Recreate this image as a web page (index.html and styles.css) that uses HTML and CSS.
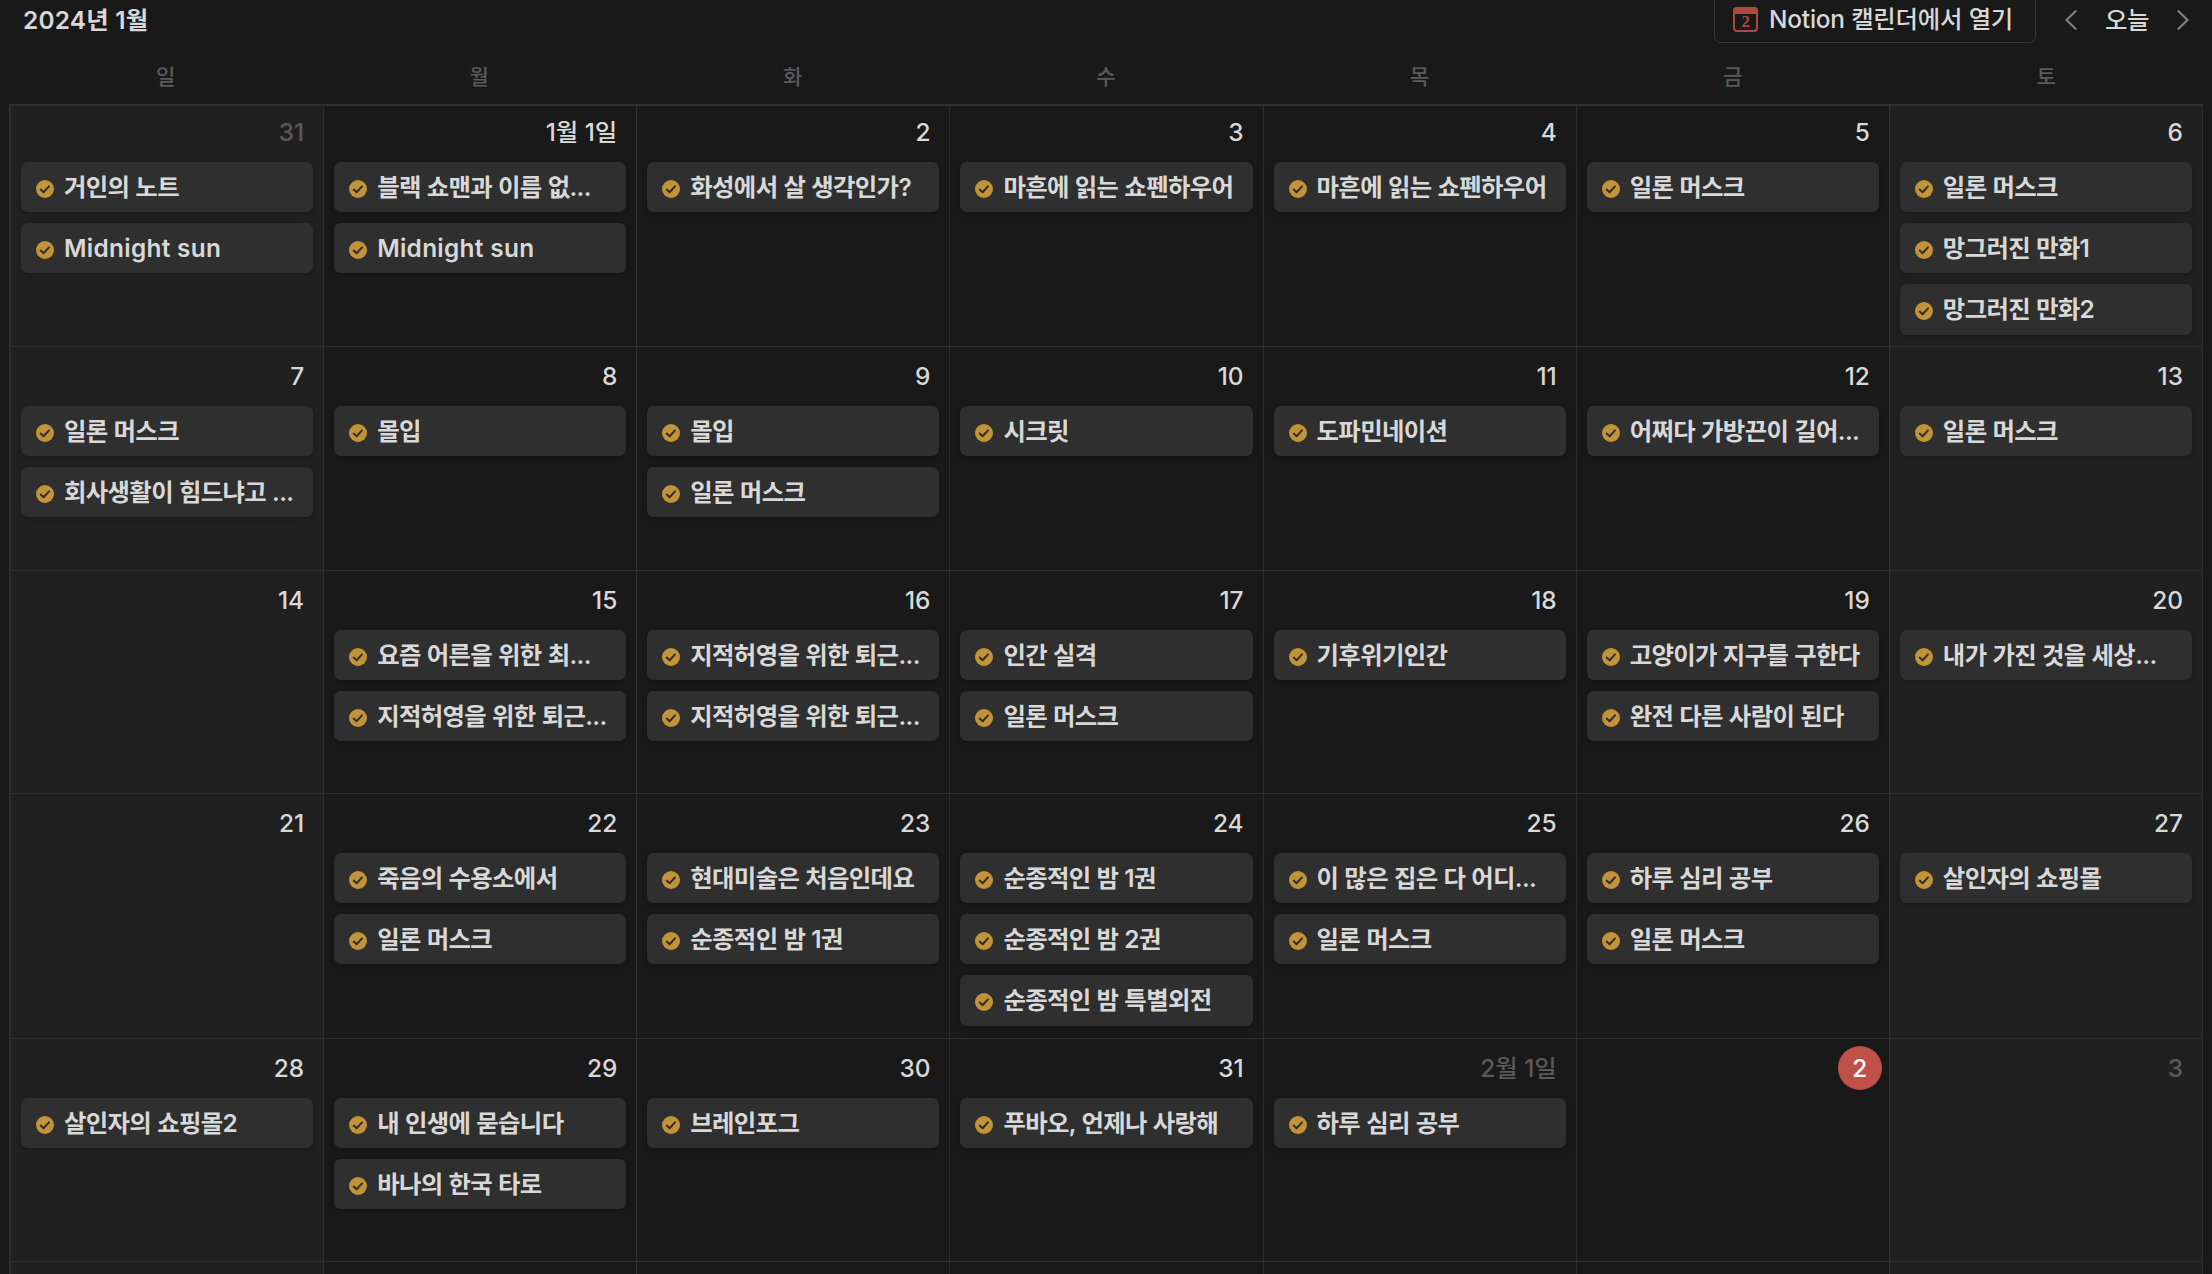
FILE: index.html
```
<!DOCTYPE html>
<html lang="ko">
<head>
  <meta charset="UTF-8">
  <title>2024년 1월</title>
  <link rel="stylesheet" href="styles.css">
</head>
<body>
  <!-- Shared icon -->
  <svg class="sprite" width="0" height="0">
    <symbol id="check" viewBox="0 0 18 18">
      <circle cx="9" cy="9" r="9" fill="#c29338"/>
      <path d="M4.7 9.6 L7.6 12.3 L13 6.4" fill="none" stroke="#2f2f2f" stroke-width="2" stroke-linecap="round" stroke-linejoin="round"/>
    </symbol>
  </svg>

  <div class="calendar">
    <!-- Toolbar -->
    <div class="toolbar">
      <div class="month-title">2024년 1월</div>
      <div class="open-button">
        <svg class="calendar-icon" viewBox="0 0 25 25">
          <rect x="1" y="1" width="23" height="23" rx="3" fill="none" stroke="#ac4a42" stroke-width="2"/>
          <path d="M0 7V4a4 4 0 0 1 4-4h17a4 4 0 0 1 4 4v3z" fill="#ac4a42"/>
          <text x="12.7" y="20" text-anchor="middle" class="icon-day">2</text>
        </svg>
        <span>Notion 캘린더에서 열기</span>
      </div>
      <svg class="arrow" viewBox="0 0 12 20"><path d="M10.5 1.2 1.5 10l9 8.800"/></svg>
      <div class="today-button">오늘</div>
      <svg class="arrow" viewBox="0 0 12 20"><path d="M1.500 1.200l9 8.800-9 8.800"/></svg>
    </div>

    <!-- Weekday names -->
    <div class="weekdays">
      <div>일</div><div>월</div><div>화</div><div>수</div><div>목</div><div>금</div><div>토</div>
    </div>

    <!-- Month grid -->
    <div class="month">
      <div class="week tall first">
        <div class="day weekend other"><div class="date">31</div>
          <div class="card"><svg><use href="#check"/></svg><span>거인의 노트</span></div>
          <div class="card latin"><svg><use href="#check"/></svg><span>Midnight sun</span></div>
        </div>
        <div class="day"><div class="date">1월 1일</div>
          <div class="card"><svg><use href="#check"/></svg><span>블랙 쇼맨과 이름 없...</span></div>
          <div class="card latin"><svg><use href="#check"/></svg><span>Midnight sun</span></div>
        </div>
        <div class="day"><div class="date">2</div>
          <div class="card"><svg><use href="#check"/></svg><span>화성에서 살 생각인가?</span></div>
        </div>
        <div class="day"><div class="date">3</div>
          <div class="card"><svg><use href="#check"/></svg><span>마흔에 읽는 쇼펜하우어</span></div>
        </div>
        <div class="day"><div class="date">4</div>
          <div class="card"><svg><use href="#check"/></svg><span>마흔에 읽는 쇼펜하우어</span></div>
        </div>
        <div class="day"><div class="date">5</div>
          <div class="card"><svg><use href="#check"/></svg><span>일론 머스크</span></div>
        </div>
        <div class="day weekend"><div class="date">6</div>
          <div class="card"><svg><use href="#check"/></svg><span>일론 머스크</span></div>
          <div class="card"><svg><use href="#check"/></svg><span>망그러진 만화1</span></div>
          <div class="card"><svg><use href="#check"/></svg><span>망그러진 만화2</span></div>
        </div>
      </div>

      <div class="week second">
        <div class="day weekend"><div class="date">7</div>
          <div class="card"><svg><use href="#check"/></svg><span>일론 머스크</span></div>
          <div class="card"><svg><use href="#check"/></svg><span>회사생활이 힘드냐고 ...</span></div>
        </div>
        <div class="day"><div class="date">8</div>
          <div class="card"><svg><use href="#check"/></svg><span>몰입</span></div>
        </div>
        <div class="day"><div class="date">9</div>
          <div class="card"><svg><use href="#check"/></svg><span>몰입</span></div>
          <div class="card"><svg><use href="#check"/></svg><span>일론 머스크</span></div>
        </div>
        <div class="day"><div class="date">10</div>
          <div class="card"><svg><use href="#check"/></svg><span>시크릿</span></div>
        </div>
        <div class="day"><div class="date">11</div>
          <div class="card"><svg><use href="#check"/></svg><span>도파민네이션</span></div>
        </div>
        <div class="day"><div class="date">12</div>
          <div class="card"><svg><use href="#check"/></svg><span>어쩌다 가방끈이 길어...</span></div>
        </div>
        <div class="day weekend"><div class="date">13</div>
          <div class="card"><svg><use href="#check"/></svg><span>일론 머스크</span></div>
        </div>
      </div>

      <div class="week">
        <div class="day weekend"><div class="date">14</div></div>
        <div class="day"><div class="date">15</div>
          <div class="card"><svg><use href="#check"/></svg><span>요즘 어른을 위한 최...</span></div>
          <div class="card"><svg><use href="#check"/></svg><span>지적허영을 위한 퇴근...</span></div>
        </div>
        <div class="day"><div class="date">16</div>
          <div class="card"><svg><use href="#check"/></svg><span>지적허영을 위한 퇴근...</span></div>
          <div class="card"><svg><use href="#check"/></svg><span>지적허영을 위한 퇴근...</span></div>
        </div>
        <div class="day"><div class="date">17</div>
          <div class="card"><svg><use href="#check"/></svg><span>인간 실격</span></div>
          <div class="card"><svg><use href="#check"/></svg><span>일론 머스크</span></div>
        </div>
        <div class="day"><div class="date">18</div>
          <div class="card"><svg><use href="#check"/></svg><span>기후위기인간</span></div>
        </div>
        <div class="day"><div class="date">19</div>
          <div class="card"><svg><use href="#check"/></svg><span>고양이가 지구를 구한다</span></div>
          <div class="card"><svg><use href="#check"/></svg><span>완전 다른 사람이 된다</span></div>
        </div>
        <div class="day weekend"><div class="date">20</div>
          <div class="card"><svg><use href="#check"/></svg><span>내가 가진 것을 세상...</span></div>
        </div>
      </div>

      <div class="week tall">
        <div class="day weekend"><div class="date">21</div></div>
        <div class="day"><div class="date">22</div>
          <div class="card"><svg><use href="#check"/></svg><span>죽음의 수용소에서</span></div>
          <div class="card"><svg><use href="#check"/></svg><span>일론 머스크</span></div>
        </div>
        <div class="day"><div class="date">23</div>
          <div class="card"><svg><use href="#check"/></svg><span>현대미술은 처음인데요</span></div>
          <div class="card"><svg><use href="#check"/></svg><span>순종적인 밤 1권</span></div>
        </div>
        <div class="day"><div class="date">24</div>
          <div class="card"><svg><use href="#check"/></svg><span>순종적인 밤 1권</span></div>
          <div class="card"><svg><use href="#check"/></svg><span>순종적인 밤 2권</span></div>
          <div class="card"><svg><use href="#check"/></svg><span>순종적인 밤 특별외전</span></div>
        </div>
        <div class="day"><div class="date">25</div>
          <div class="card"><svg><use href="#check"/></svg><span>이 많은 집은 다 어디...</span></div>
          <div class="card"><svg><use href="#check"/></svg><span>일론 머스크</span></div>
        </div>
        <div class="day"><div class="date">26</div>
          <div class="card"><svg><use href="#check"/></svg><span>하루 심리 공부</span></div>
          <div class="card"><svg><use href="#check"/></svg><span>일론 머스크</span></div>
        </div>
        <div class="day weekend"><div class="date">27</div>
          <div class="card"><svg><use href="#check"/></svg><span>살인자의 쇼핑몰</span></div>
        </div>
      </div>

      <div class="week">
        <div class="day weekend"><div class="date">28</div>
          <div class="card"><svg><use href="#check"/></svg><span>살인자의 쇼핑몰2</span></div>
        </div>
        <div class="day"><div class="date">29</div>
          <div class="card"><svg><use href="#check"/></svg><span>내 인생에 묻습니다</span></div>
          <div class="card"><svg><use href="#check"/></svg><span>바나의 한국 타로</span></div>
        </div>
        <div class="day"><div class="date">30</div>
          <div class="card"><svg><use href="#check"/></svg><span>브레인포그</span></div>
        </div>
        <div class="day"><div class="date">31</div>
          <div class="card"><svg><use href="#check"/></svg><span>푸바오, 언제나 사랑해</span></div>
        </div>
        <div class="day other"><div class="date">2월 1일</div>
          <div class="card"><svg><use href="#check"/></svg><span>하루 심리 공부</span></div>
        </div>
        <div class="day"><div class="date today"><span>2</span></div></div>
        <div class="day weekend other"><div class="date">3</div></div>
      </div>

      <!-- Top edge of the next week -->
      <div class="week last">
        <div class="day weekend"></div><div class="day"></div><div class="day"></div><div class="day"></div>
        <div class="day"></div><div class="day"></div><div class="day weekend"></div>
      </div>
    </div>
  </div>
</body>
</html>
```
FILE: styles.css
```
:root {
  --bg: #191919;
  --weekend: #202020;
  --line: #2f2f2f;
  --card: #2f2f2f;
  --text: #d8d8d8;
  --muted: #5a5a5a;
  --today: #c0504a;
}

* {
  box-sizing: border-box;
}

body {
  margin: 0;
  background: var(--bg);
  color: var(--text);
  font-family: Inter, "Noto Sans CJK KR", sans-serif;
  font-size: 24.4px;
}

.sprite {
  display: block;
}

.calendar {
  height: 1274px;
  padding: 0 9px;
  overflow: hidden;
}

/* Toolbar */
.toolbar {
  display: flex;
  align-items: center;
  height: 43px;
  padding: 0 14px 3px 14px;
}
.month-title {
  flex: 1;
  padding-bottom: 4px;
  font-weight: 600;
  letter-spacing: 0.2px;
}
.open-button {
  display: flex;
  align-items: center;
  gap: 11px;
  width: 322px;
  height: 52px;
  margin: -6px 29px 0 0;
  padding: 4px 0 0 18px;
  border: 1px solid #373737;
  border-radius: 7px;
  font-weight: 500;
  letter-spacing: -0.2px;
  white-space: nowrap;
}
.open-button span {
  padding-bottom: 3px;
}
.calendar-icon {
  width: 25px;
  height: 25px;
  flex: none;
}
.icon-day {
  font: bold 17px "Liberation Serif", serif;
  letter-spacing: 0;
  fill: #ac4a42;
}
.arrow {
  width: 12px;
  height: 20px;
  fill: none;
  stroke: #7f7f7f;
  stroke-width: 2.2;
  stroke-linecap: round;
}
.today-button {
  width: 100px;
  padding-bottom: 4px;
  text-align: center;
  font-weight: 500;
  letter-spacing: -0.5px;
}

/* Weekday names */
.weekdays {
  display: grid;
  grid-template-columns: repeat(7, 1fr);
  height: 61px;
  color: var(--muted);
  font-size: 21px;
  font-weight: 500;
  line-height: 68px;
  text-align: center;
}

/* Month grid */
.month {
  width: 2194px;
  border-top: 2px solid var(--line);
  border-left: 2px solid var(--line);
}
.week {
  display: grid;
  grid-template-columns: repeat(7, 1fr);
  height: 223px;
}
.week.tall {
  height: 245px;
}
.week.first {
  height: 241px;
}
.week.second {
  height: 224px;
}
.week.last {
  height: 30px;
}
.day {
  border-right: 1px solid var(--line);
  border-bottom: 1px solid var(--line);
  padding: 0 10px;
}
.day.weekend {
  background: var(--weekend);
}
.week.first .date {
  margin-top: -3px;
}
.date {
  height: 59px;
  padding-right: 9px;
  line-height: 58px;
  text-align: right;
  font-weight: 450;
}
.other .date {
  color: var(--muted);
}
.today span {
  display: inline-block;
  width: 44px;
  height: 44px;
  margin-right: -12px;
  border-radius: 50%;
  background: var(--today);
  color: #fff;
  line-height: 44px;
  text-align: center;
}

.card {
  display: flex;
  align-items: center;
  height: 50.400px;
  margin-bottom: 10.7px;
  padding-left: 15px;
  border-radius: 7px;
  background: var(--card);
  box-shadow: 0 2px 5px rgba(0, 0, 0, 0.22);
  font-weight: 600;
  letter-spacing: -0.65px;
  word-spacing: 0.5px;
  white-space: pre;
}
.card span {
  padding-bottom: 4px;
}
.card.latin {
  letter-spacing: 0.3px;
  word-spacing: 0;
}
.card.latin span {
  padding-bottom: 0;
}
.card svg {
  width: 18px;
  height: 18px;
  margin: 3px 10px 0 0;
  flex: none;
}
```
